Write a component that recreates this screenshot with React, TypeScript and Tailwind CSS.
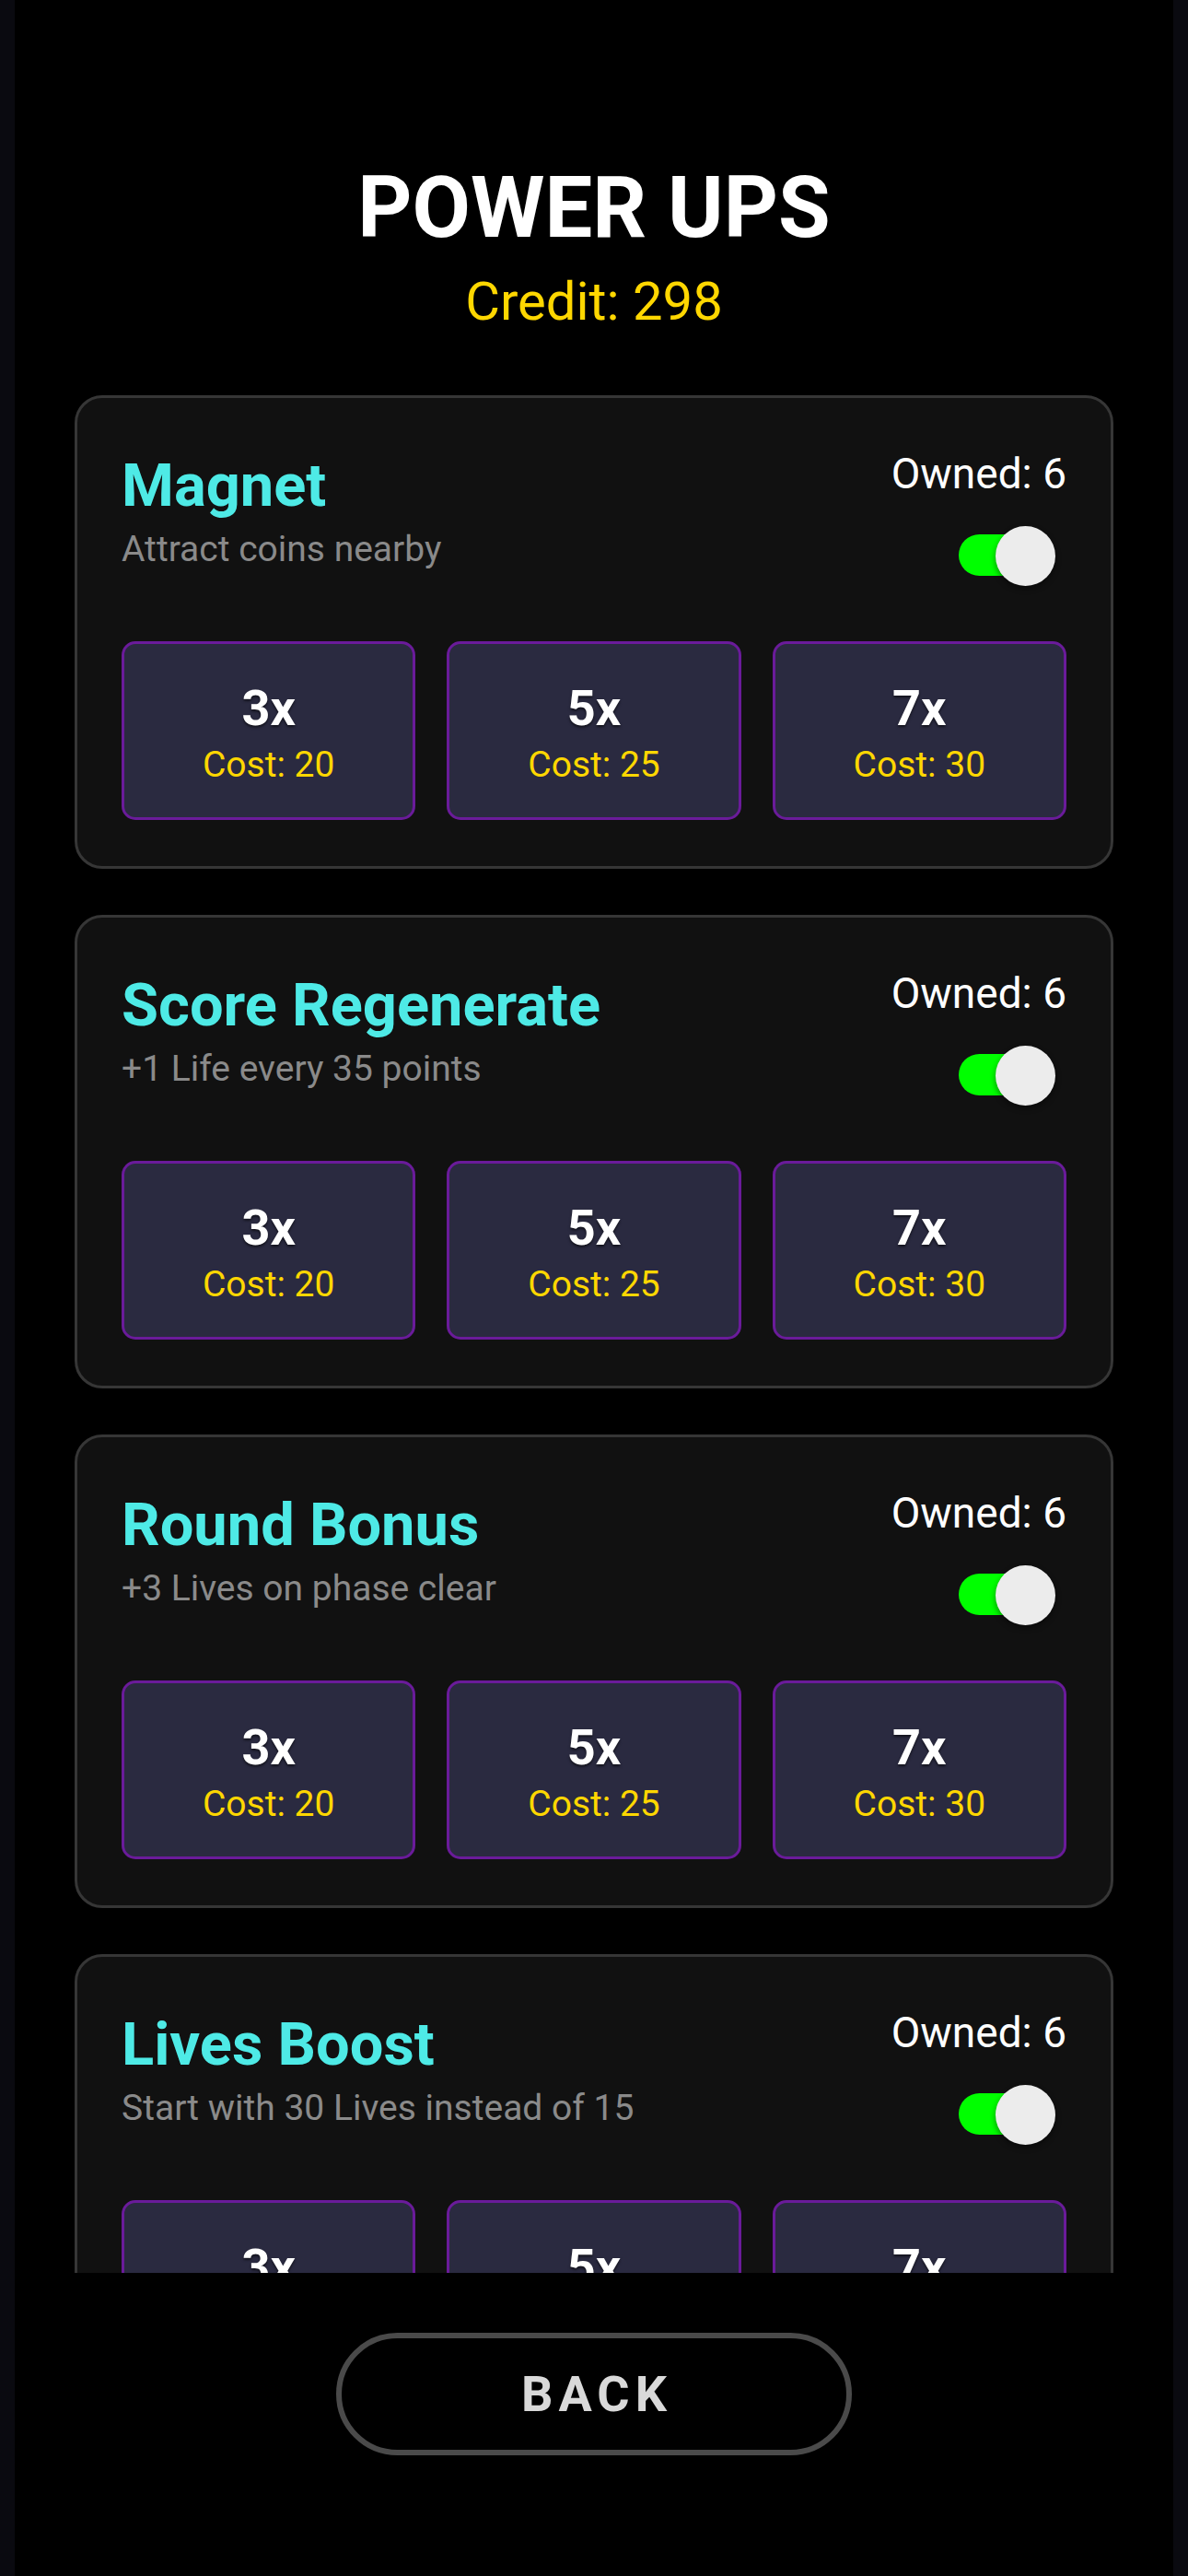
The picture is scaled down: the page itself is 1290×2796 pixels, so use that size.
import React from "react";

const powerUps = [
  { name: "Magnet", desc: "Attract coins nearby", owned: 6 },
  { name: "Score Regenerate", desc: "+1 Life every 35 points", owned: 6 },
  { name: "Round Bonus", desc: "+3 Lives on phase clear", owned: 6 },
  { name: "Lives Boost", desc: "Start with 30 Lives instead of 15", owned: 6 },
];

const tiers = [
  { mult: "3x", cost: 20 },
  { mult: "5x", cost: 25 },
  { mult: "7x", cost: 30 },
];

function Toggle() {
  return (
    <div className="relative w-[105px] h-[65px] mr-[12px]">
      <div className="absolute left-0 top-[9px] w-[94px] h-[45px] rounded-full bg-[#00ff00]" />
      <div className="absolute right-0 top-0 w-[65px] h-[65px] rounded-full bg-[#ececec] shadow-[0_3px_6px_rgba(0,0,0,0.45)]" />
    </div>
  );
}

export default function App() {
  return (
    <div
      className="w-full min-h-[2796px] bg-[#0a0a10] flex justify-center"
      style={{ fontFamily: "Roboto, 'Noto Sans', sans-serif" }}
    >
      <div className="w-[1258px] h-[2796px] bg-black flex flex-col items-center">
        {/* Header */}
        <h1 className="pt-[180px] text-[92px] leading-[92px] font-bold text-white">POWER UPS</h1>
        <p className="mt-[26px] text-[58px] leading-[58px] text-[#ffd700]">Credit: 298</p>

        {/* Scroll list */}
        <div className="w-full h-[2111px] overflow-hidden px-[65px] pt-[73px]">
          <div className="flex flex-col gap-[50px]">
            {powerUps.map((p) => (
              <div
                key={p.name}
                className="bg-[#111111] border-[3px] border-[#363636] rounded-[30px] px-[48px] pt-[48px] pb-[50px]"
              >
                <div className="flex items-start justify-between">
                  <div className="flex flex-col">
                    <h3 className="mt-[14px] text-[65px] leading-[66px] font-bold text-[#4eeae6]">{p.name}</h3>
                    <p className="mt-[17px] text-[39px] leading-[39px] text-[#8a8a8a]">{p.desc}</p>
                  </div>
                  <div className="flex flex-col items-end">
                    <p className="mt-[12px] text-[46px] leading-[45px] text-white">Owned: {p.owned}</p>
                    <div className="mt-[34px]">
                      <Toggle />
                    </div>
                  </div>
                </div>

                <div className="mt-[60px] grid grid-cols-3 gap-[34px]">
                  {tiers.map((t) => (
                    <div
                      key={t.mult}
                      className="h-[194px] bg-[#2a2a40] border-[3px] border-[#6a1b9a] rounded-[15px] flex flex-col items-center pt-[43px]"
                    >
                      <span className="text-[54px] leading-[54px] font-bold text-white [text-shadow:0_2px_3px_rgba(0,0,0,0.6)]">
                        {t.mult}
                      </span>
                      <span className="mt-[15px] text-[39px] leading-[39px] text-[#ffd700]">Cost: {t.cost}</span>
                    </div>
                  ))}
                </div>
              </div>
            ))}
          </div>
        </div>

        {/* Back */}
        <button className="mt-[65px] w-[560px] h-[133px] rounded-full border-[6px] border-[#4a4a4a] bg-black flex items-center justify-center">
          <span className="text-[54px] leading-[54px] font-bold tracking-[6px] text-[#d9d9d9] pl-[6px]">BACK</span>
        </button>
      </div>
    </div>
  );
}
